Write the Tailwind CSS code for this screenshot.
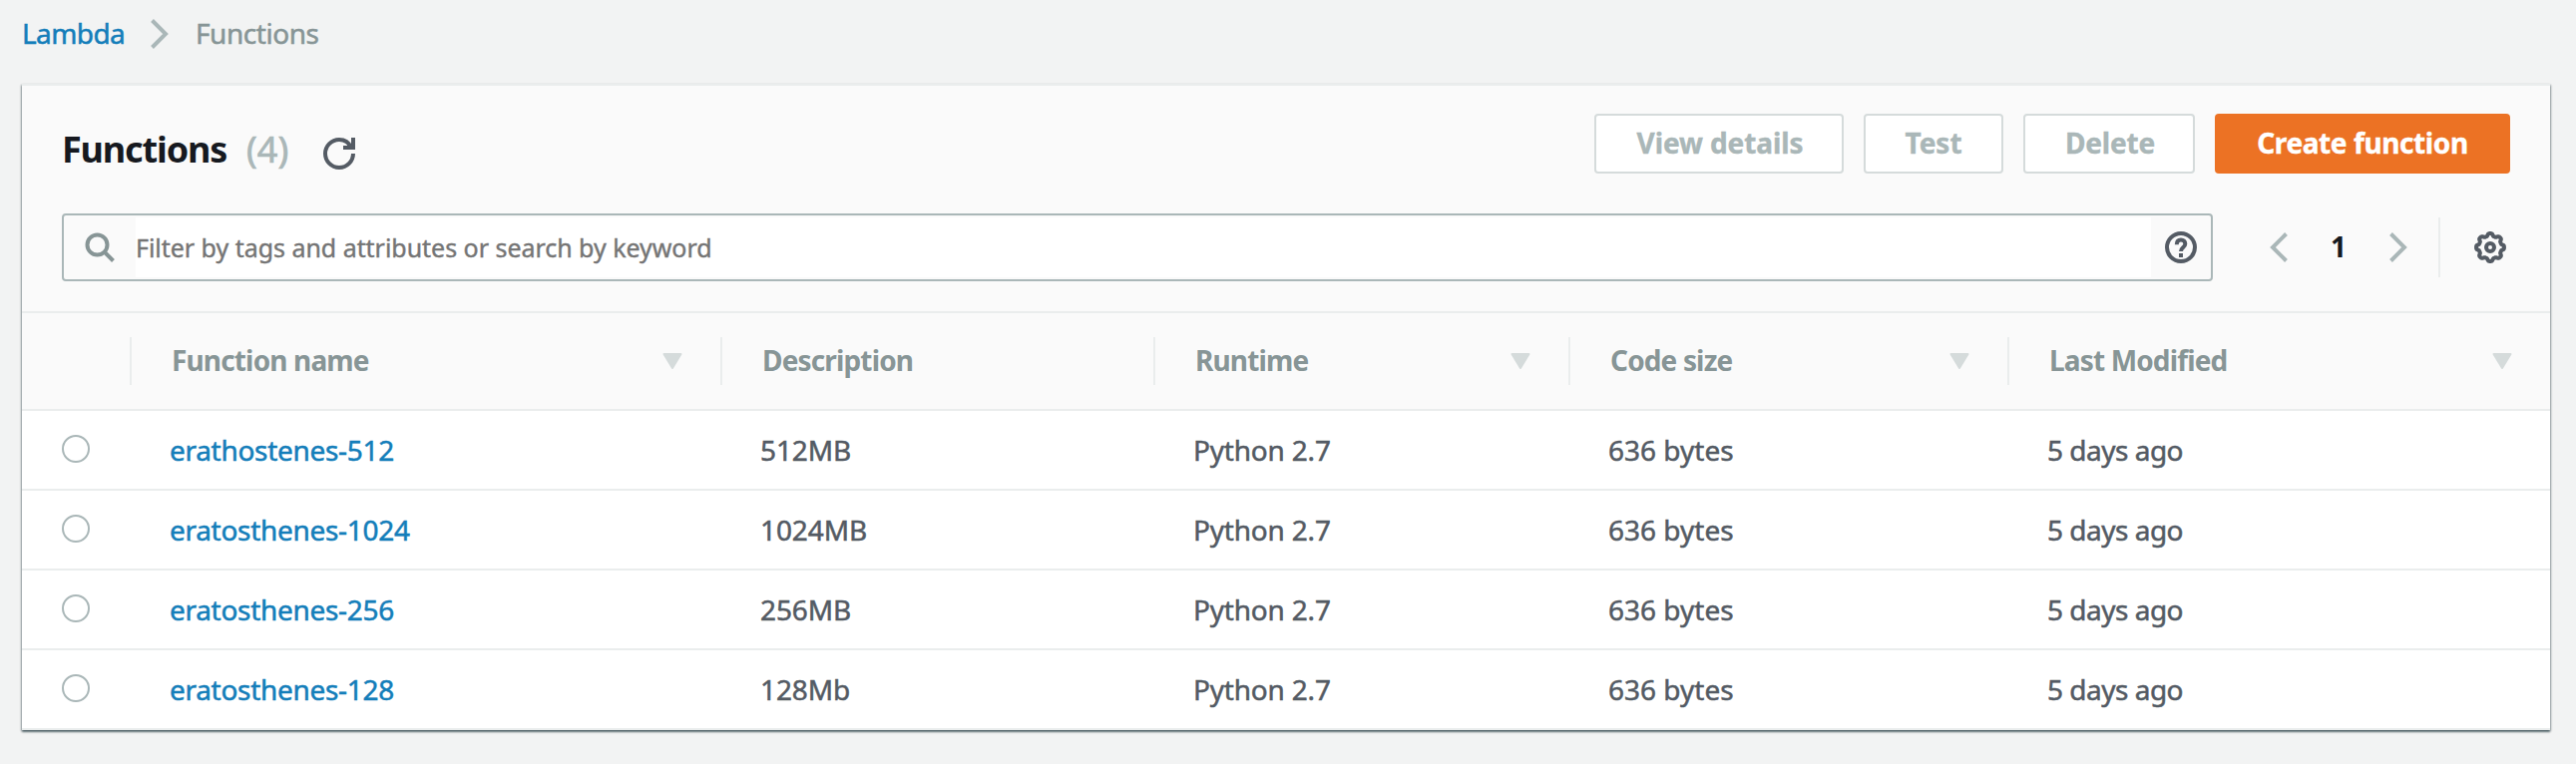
<!DOCTYPE html>
<html lang="en">
<head>
<meta charset="utf-8">
<title>Lambda functions</title>
<script src="https://cdn.jsdelivr.net/npm/@tailwindcss/browser@4"></script>
</head>
<body class="h-[766px] w-[2582px] overflow-hidden bg-[#f2f3f3] font-['Noto_Sans',sans-serif] text-[28px] leading-[40px] text-[#545b64]">
<nav class="flex h-[84px] items-start pt-[13px] pl-[22px] tracking-[-0.6px] [-webkit-text-stroke:0.5px]">
  <a class="w-[129px] text-[#147eba]">Lambda</a>
  <svg class="mt-[6px] mr-[27px] h-[30px] w-[18px]" viewBox="0 0 18 30" fill="none" stroke="#aab7b8" stroke-width="4"><path d="M1.5 1.5 15 15 1.5 28.5"/></svg>
  <span class="tracking-[-0.45px] text-[#879596]">Functions</span>
</nav>
<main class="ml-[22px] h-[648px] w-[2534px] border-t-2 border-[#eaeded] bg-white shadow-[0_2px_2px_0_rgba(0,28,36,0.5),1px_1px_2px_0_rgba(0,28,36,0.25),-1px_1px_2px_0_rgba(0,28,36,0.25)]">
  <header class="h-[228px] border-b-2 border-[#eaeded] bg-[#fafafa] px-10 pt-7">
    <div class="flex h-[60px] items-start">
      <h1 class="mt-[16px] w-[185px] text-[36px] font-bold tracking-[-1.15px] text-[#16191f]">Functions</h1>
      <span class="mt-[16px] w-[77px] text-[36px] text-[#aab7b8] [-webkit-text-stroke:0.7px]">(4)</span>
      <svg class="mt-6 h-8 w-8" viewBox="0 0 16 16" fill="none" stroke="#545b64" stroke-width="2"><path d="M10 5h5V0"/><path d="M15 8a7 7 0 1 1-7-7c2.8 0 4.900 1.500 6 4"/><path d="M12 3.500h3V5h-3z" fill="#545b64" stroke="none"/></svg>
      <div class="ml-auto flex gap-5 text-center font-bold text-[#aab7b8] [-webkit-text-stroke:0.4px]">
        <button class="h-[60px] w-[250px] rounded-[4px] border-2 border-[#d5dbdb] bg-white pb-0.5 pl-0.5 tracking-[-0.1px]">View details</button>
        <button class="h-[60px] w-[140px] rounded-[4px] border-2 border-[#d5dbdb] bg-white pb-0.5">Test</button>
        <button class="h-[60px] w-[172px] rounded-[4px] border-2 border-[#d5dbdb] bg-white pb-0.5 pl-0.5 tracking-[-0.2px]">Delete</button>
        <button class="h-[60px] w-[296px] rounded-[4px] bg-[#ec7224] pb-0.5 tracking-[-0.4px] text-white">Create function</button>
      </div>
    </div>
    <div class="mt-10 flex h-[68px] items-center">
      <div class="flex h-[68px] w-[2156px] items-center rounded-[4px] border-2 border-[#aab7b8] bg-[#fafafa] py-[2px]">
        <svg class="mr-[20px] ml-[19px] h-[33px] w-[33px]" viewBox="0 0 33 33" fill="none" stroke="#879596" stroke-width="4"><circle cx="14.500" cy="13.500" r="10"/><path d="m21.500 20.500 9 9"/></svg>
        <div class="flex h-[60px] flex-1 items-center bg-white text-[25px] tracking-[-0.03px] text-[#757575] [-webkit-text-stroke:0.4px]">Filter by tags and attributes or search by keyword</div>
        <svg class="mr-[14px] ml-[14px] h-8 w-8" viewBox="0 0 32 32" fill="none" stroke="#545b64" stroke-width="4"><circle cx="16" cy="16" r="14"/><path d="M11.800 13.200c0-3 1.700-4.700 4.200-4.700s4.300 1.500 4.300 4c0 3.500-4.300 3.500-4.300 7.500"/><path d="M16 22v4"/></svg>
      </div>
      <svg class="ml-[57px] h-[30px] w-[18px]" viewBox="0 0 18 30" fill="none" stroke="#aab7b8" stroke-width="4"><path d="M16.500 1.500 3 15l13.500 13.500"/></svg>
      <span class="w-[102px] pb-[2px] text-center font-bold text-[#16191f]">1</span>
      <svg class="h-[30px] w-[18px]" viewBox="0 0 18 30" fill="none" stroke="#aab7b8" stroke-width="4"><path d="M1.500 1.500 15 15 1.500 28.500"/></svg>
      <div class="mr-[34px] ml-[31px] h-[60px] w-[2px] bg-[#eaeded]"></div>
      <svg class="h-8 w-8" viewBox="-16 -16 32 32" fill="none" stroke="#545b64" stroke-width="4" stroke-linejoin="round"><circle r="4"/><path id="gear"/></svg>
    </div>
  </header>
  <div class="flex h-[98px] items-center border-b-2 border-[#eaeded] bg-[#fafafa] font-bold tracking-[-0.85px] text-[#879596]" id="head"></div>
  <div id="rows"></div>
</main>
<script>
  // Gear outline: eight rounded teeth around the hub.
  let d = '';
  for (let i = 0; i <= 160; i++) {
    const a = i / 160 * Math.PI * 2;
    const r = 12.7 + 1.3 * Math.tanh(2 * Math.cos(8 * a));
    d += (i ? 'L' : 'M') + (r * Math.cos(a)).toFixed(2) + ' ' + (r * Math.sin(a)).toFixed(2);
  }
  document.getElementById('gear').setAttribute('d', d + 'Z');

  const cols = [['Function name', 592, 1], ['Description', 434, 0], ['Runtime', 416, 1], ['Code size', 440, 1], ['Last Modified', 544, 1]];
  document.getElementById('head').innerHTML = '<div class="w-[108px] shrink-0"></div>' + cols.map(([t, w, s]) => `
    <div class="flex h-12 shrink-0 items-center border-l-2 border-[#eaeded] pr-[38px] pl-[40px]" style="width:${w}px">
      <span class="pb-[2px]">${t}</span>
      ${s ? '<svg class="ml-auto h-4 w-5" viewBox="0 0 20 16" fill="#d5dbdb" stroke="#d5dbdb" stroke-width="2" stroke-linejoin="round"><path d="M1.500 1h17L10 15z"/></svg>' : ''}
    </div>`).join('');

  const data = [['erathostenes-512', '512MB'], ['eratosthenes-1024', '1024MB'], ['eratosthenes-256', '256MB'], ['eratosthenes-128', '128Mb']];
  document.getElementById('rows').innerHTML = data.map(([n, m]) => `
    <div class="flex h-20 items-center border-b-2 border-[#eaeded] [-webkit-text-stroke:0.5px]">
      <div class="mr-[80px] mb-[2px] ml-10 h-7 w-7 rounded-full border-2 border-[#aab7b8] bg-white"></div>
      <a class="w-[592px] tracking-[-0.3px] text-[#147eba]">${n}</a>
      <span class="w-[434px] tracking-[-0.1px]">${m}</span>
      <span class="w-[416px] tracking-[-0.2px]">Python 2.7</span>
      <span class="w-[440px]">636 bytes</span>
      <span class="tracking-[-0.5px]">5 days ago</span>
    </div>`).join('');
</script>
</body>
</html>
